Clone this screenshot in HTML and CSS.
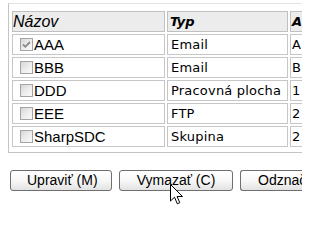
FILE: index.html
```html
<!DOCTYPE html>
<html>
<head>
<meta charset="utf-8">
<link rel="stylesheet" href="styles.css">
</head>
<body>
<div class="page">
<div class="panel">
  <table class="grid">
    <colgroup>
      <col class="c-name">
      <col class="c-type">
      <col class="c-addr">
    </colgroup>
    <thead>
      <tr>
        <th class="h-name">Názov</th>
        <th class="h-type">Typ</th>
        <th class="h-addr">A</th>
      </tr>
    </thead>
    <tbody>
      <tr>
        <td class="name"><span class="cb checked"><svg viewBox="0 0 11 11" width="11" height="11"><path d="M2 5.5 L4.3 7.8 L9 3" fill="none" stroke="#8a8a8a" stroke-width="1.8"/></svg></span>AAA</td>
        <td class="type">Email</td>
        <td class="addr">A</td>
      </tr>
      <tr>
        <td class="name"><span class="cb"></span>BBB</td>
        <td class="type">Email</td>
        <td class="addr">B</td>
      </tr>
      <tr>
        <td class="name"><span class="cb"></span>DDD</td>
        <td class="type">Pracovná plocha</td>
        <td class="addr">1</td>
      </tr>
      <tr>
        <td class="name"><span class="cb"></span>EEE</td>
        <td class="type">FTP</td>
        <td class="addr">2</td>
      </tr>
      <tr>
        <td class="name"><span class="cb"></span>SharpSDC</td>
        <td class="type">Skupina</td>
        <td class="addr">2</td>
      </tr>
    </tbody>
  </table>
</div>
<div class="actions">
  <button class="btn b-edit">Upraviť (M)</button>
  <button class="btn b-del">Vymazať (C)</button>
  <button class="btn b-clear">Odznač</button>
</div>
<svg class="cursor" width="14" height="22" viewBox="0 0 14 22"><path d="M0.5 0.5 V17 L4.5 13.2 L7.3 19.8 L9.8 18.7 L7.1 12.5 H12.5 Z" fill="#fff" stroke="#000" stroke-width="1" stroke-linejoin="miter"/></svg>
</div>
</body>
</html>
```

FILE: styles.css
```css
html, body {
  margin: 0;
  padding: 0;
  background: #fff;
  width: 302px;
  height: 212px;
  overflow: hidden;
}
.page {
  width: 302px;
  height: 212px;
  overflow: hidden;
  position: relative;
  font-family: "Liberation Sans", Arial, sans-serif;
  color: #000;
}
.panel {
  margin: 3px 0 0 8px;
  width: 294px;
  box-sizing: border-box;
  border-top: 1px solid #e2e2e2;
  border-left: 1px solid #c4c4c4;
  border-bottom: 1px solid #c4c4c4;
  padding: 5px 0 3px 1px;
  overflow: hidden;
}
.grid {
  border-collapse: separate;
  border-spacing: 2px;
  table-layout: fixed;
  width: 296px;
}
.c-name { width: 153px; }
.c-type { width: 121px; }
.c-addr { width: 18px; }
.grid th, .grid td {
  box-sizing: border-box;
  border: 1px solid #c6c6c6;
  height: 21px;
  padding: 0;
  line-height: 19px;
  white-space: nowrap;
  overflow: hidden;
  text-align: left;
  vertical-align: middle;
}
.grid th {
  background: #ececec;
  border-color: #c0c0c0;
}
.grid .h-addr, .grid .addr {
  border-right: none;
}
.h-name {
  font-family: "Liberation Sans", Arial, sans-serif;
  font-style: italic;
  font-weight: normal;
  font-size: 16px;
  padding-left: 1px;
}
.h-type, .h-addr {
  font-family: "DejaVu Sans", Verdana, sans-serif;
  font-style: italic;
  font-weight: bold;
  font-size: 13px;
}
.grid .h-type { padding-left: 2px; }
.grid .h-addr { padding-left: 1px; }
.grid .name {
  font-family: "Liberation Sans", Arial, sans-serif;
  font-size: 15px;
  padding-left: 7px;
}
.type, .addr {
  font-family: "DejaVu Sans", Verdana, sans-serif;
  font-size: 13px;
  letter-spacing: 0.2px;
}
.grid .type { padding-left: 3px; }
.grid .addr { padding-left: 1px; }
.cb {
  display: inline-block;
  box-sizing: border-box;
  width: 13px;
  height: 13px;
  margin-right: 1px;
  vertical-align: -1px;
  border: 1px solid #a4a4a4;
  background: linear-gradient(135deg, #d6d6d6 0%, #ececec 50%, #fbfbfb 100%);
}
.cb svg {
  display: block;
}
.actions {
  display: flex;
  gap: 7px;
  margin: 17px 0 0 10px;
  width: 292px;
  overflow: hidden;
}
.btn {
  box-sizing: border-box;
  height: 21px;
  padding: 0 16px;
  border: 1px solid #6f6f6f;
  border-radius: 3px;
  background: linear-gradient(#ffffff 0%, #f6f6f6 55%, #e2e2e2 100%);
  font-family: "Liberation Sans", Arial, sans-serif;
  font-size: 14px;
  line-height: 19px;
  color: #000;
  white-space: nowrap;
  flex: none;
}
.b-edit { width: 102px; }
.b-del { width: 114px; }
.b-clear { width: 70px; text-align: left; padding-left: 17px; border-right: none; border-radius: 3px 0 0 3px; }
.cursor {
  position: absolute;
  left: 170px;
  top: 184px;
}
```
